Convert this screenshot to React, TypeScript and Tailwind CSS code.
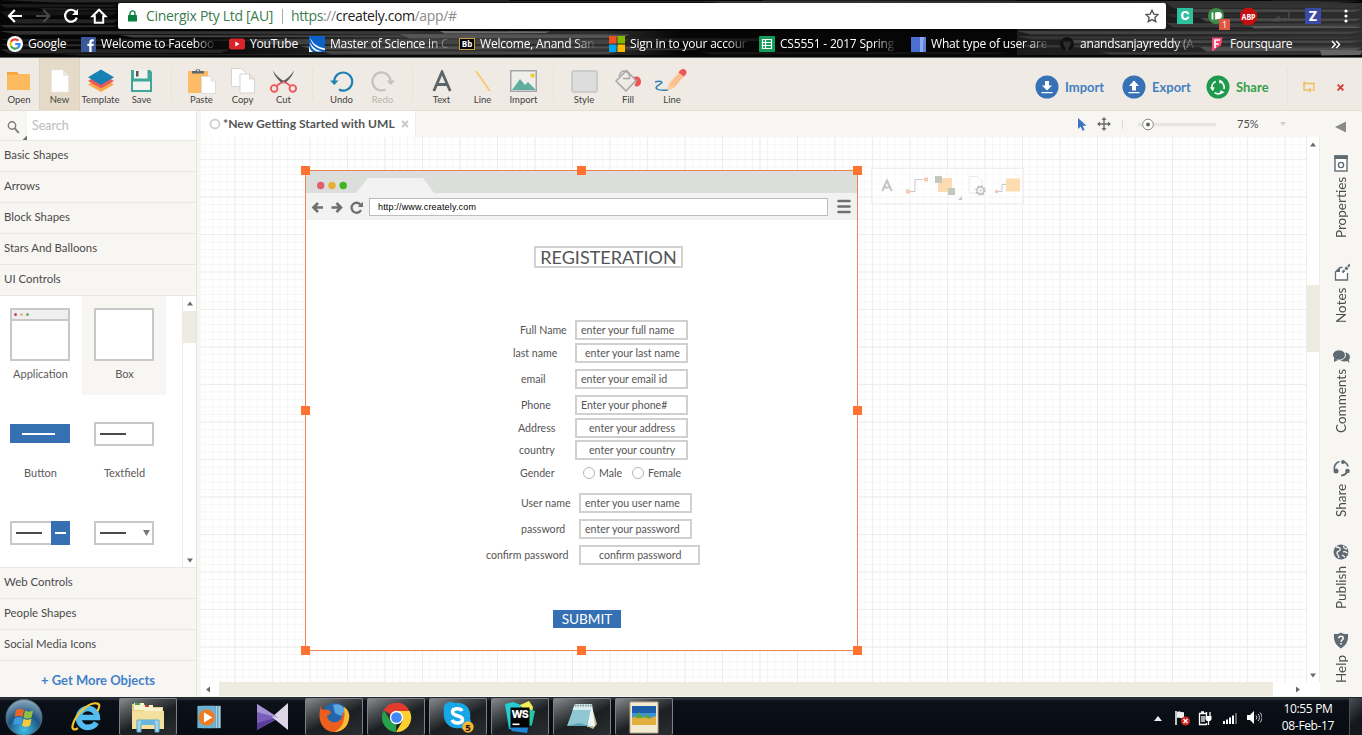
import React from "react";

const lato = "font-['Lato',sans-serif]";
const segoe = "font-['Open_Sans','Noto_Sans',sans-serif]";

/* ---------- browser chrome ---------- */

const streaks: [number, number, number, number, string][] = [
  [0, 0, 1362, 2, "#2e2e2e"], [700, 1, 662, 2, "#3a3a3a"], [0, 4, 118, 3, "#1f1f1f"], [0, 11, 118, 4, "#1a1a1a"], [10, 19, 108, 4, "#2a2a2a"],
  [0, 25, 118, 2, "#333"], [40, 8, 78, 2, "#242424"], [1166, 3, 196, 5, "#353535"], [1180, 9, 182, 3, "#4c4c4c"],
  [1166, 14, 196, 3, "#2e2e2e"], [1200, 18, 162, 3, "#505050"], [1166, 23, 196, 4, "#404040"], [1250, 26, 112, 2, "#606060"],
  [0, 31, 420, 3, "#3a3a3a"], [120, 35, 330, 2, "#484848"], [0, 39, 300, 2, "#222"], [250, 39, 380, 5, "#474747"],
  [0, 44, 200, 2, "#333"], [300, 46, 340, 3, "#555"], [400, 34, 230, 4, "#5a5a5a"], [320, 51, 300, 3, "#4a4a4a"],
  [0, 49, 230, 4, "#2c2c2c"], [60, 54, 560, 1, "#2c2c2c"], [440, 31, 110, 2, "#777"], [560, 48, 140, 2, "#3a3a3a"],
  [640, 38, 130, 3, "#1e1e1e"], [700, 52, 310, 2, "#1a1a1a"], [1017, 31, 345, 3, "#484848"], [1017, 36, 345, 3, "#383838"],
  [1060, 40, 302, 3, "#4c4c4c"], [1017, 45, 345, 2, "#3c3c3c"], [1200, 47, 162, 4, "#565656"], [1100, 52, 262, 2, "#3c3c3c"],
  [1320, 50, 42, 5, "#707070"],
];

function Streaks() {
  return (
    <svg className="absolute inset-0 h-full w-full" viewBox="0 0 1362 58" preserveAspectRatio="none">
      <defs>
        <linearGradient id="grayLeft"><stop offset="0" stopColor="#2c2c2c" stopOpacity="0" /><stop offset=".4" stopColor="#303030" /><stop offset=".85" stopColor="#2c2c2c" /><stop offset="1" stopColor="#2c2c2c" stopOpacity="0" /></linearGradient>
        <linearGradient id="grayRight"><stop offset="0" stopColor="#1c1c1c" /><stop offset="1" stopColor="#2e2e2e" /></linearGradient>
      </defs>
      <rect x="200" y="31" width="480" height="24" fill="url(#grayLeft)" />
      <rect x="1017" y="29" width="345" height="26" fill="url(#grayRight)" />
      <rect x="1166" y="3" width="196" height="26" fill="url(#grayRight)" />
      {streaks.map(([x, y, w, h, c], i) => (
        <path key={i} fill={c} opacity=".85" d={`M${x} ${y}L${x + w} ${y + 0.6}L${x + w * 0.96} ${y + h}L${x + w * 0.04} ${y + h + 0.4}z`} />
      ))}
      <path d="M0 57.5H1362" stroke="#6a6a68" />
    </svg>
  );
}

function GoogleG() {
  return (
    <svg width="16" height="16" viewBox="0 0 16 16" fill="none">
      <circle cx="8" cy="8" r="8" fill="#fff" />
      <g strokeWidth="2.2">
        <path d="M11.4 4.8A4.6 4.6 0 0 0 4 5.8" stroke="#ea4335" />
        <path d="M4 5.8a4.6 4.6 0 0 0 0 4.6" stroke="#fbbc05" />
        <path d="M4 10.3a4.6 4.6 0 0 0 7 1.2" stroke="#34a853" />
        <path d="M11 11.6A4.6 4.6 0 0 0 12.6 8.2H8.2" stroke="#4285f4" />
      </g>
    </svg>
  );
}
const FbIcon = () => (
  <svg width="15" height="15" viewBox="0 0 15 15">
    <rect width="15" height="15" rx="1" fill="#3b5998" />
    <path d="M8.3 15V9H6.4V6.8h1.9V5.2c0-1.9 1.1-3 2.9-3h1.6v2.2h-1.1c-.9 0-1.1.4-1.1 1.1v1.3h2.2L12.500 9h-1.900v6z" fill="#fff" />
  </svg>
);
const YtIcon = () => (
  <svg width="16" height="16" viewBox="0 0 16 16">
    <rect y="2.500" width="16" height="11" rx="2.500" fill="#d9252a" />
    <path d="M6.300 5.600v4.800L10.500 8z" fill="#fff" />
  </svg>
);
const SwooshIcon = () => (
  <svg width="16" height="16" viewBox="0 0 16 16">
    <rect width="16" height="16" fill="#0a62c8" />
    <path d="M1 1C3 7 8 11 16 12.500V14C7 13 2 8 1 1zM1 6c2 5 6 8 12 9.500H8C4 14 1.500 11 1 6zM0 10c1 3 2 5 4 6H0z" fill="#fff" />
  </svg>
);
const BbIcon = () => (
  <svg width="16" height="12" viewBox="0 0 16 12">
    <rect x=".5" y=".5" width="15" height="11" fill="#000" stroke="#c9a23c" />
    <text x="8" y="9" fill="#fff" fontSize="8" fontWeight="700" textAnchor="middle" fontFamily="Open Sans">Bb</text>
  </svg>
);
const MsIcon = () => (
  <svg width="16" height="16" viewBox="0 0 16 16">
    <path d="M0 0h7.500v7.500H0z" fill="#f25022" /><path d="M8.500 0H16v7.500H8.500z" fill="#7fba00" />
    <path d="M0 8.500h7.500V16H0z" fill="#00a4ef" /><path d="M8.500 8.500H16V16H8.500z" fill="#ffb900" />
  </svg>
);
const SheetIcon = () => (
  <svg width="16" height="16" viewBox="0 0 16 16">
    <rect width="16" height="16" rx="1" fill="#0f9d58" />
    <path d="M3.500 3.500h9v9h-9zM3.500 6.500h9M3.500 9.500h9M6.500 3.500v9" fill="none" stroke="#fff" strokeWidth="1.200" />
  </svg>
);
const BlueIcon = () => (
  <svg width="15" height="15" viewBox="0 0 15 15">
    <rect width="15" height="15" fill="#4a6fd0" /><path d="M9 0h4l-1 15H9z" fill="#8eaaf0" /><path d="M13 0h2v15h-3z" fill="#5d80dc" />
  </svg>
);
const GhIcon = () => (
  <svg width="16" height="16" viewBox="0 0 16 16">
    <circle cx="8" cy="8" r="7" fill="#101010" />
    <path d="M4.500 4.500 6.500 5.500h3l2-1v5L9.500 11.500V15h-3v-3.500L4.500 9.500z" fill="#2c2c2c" />
  </svg>
);
const FsIcon = () => (
  <svg width="16" height="16" viewBox="0 0 16 16">
    <path d="M3 1.500h10.500L12 9.500 9 11l-4.500 4H3z" fill="#f94877" /><path d="M5.500 4h5.500M5.500 8h4M6 3.500V12" stroke="#fff" strokeWidth="1.700" />
  </svg>
);

const bookmarks: { icon: React.ReactNode; text: string; box: string; fade?: boolean }[] = [
  { icon: <GoogleG />, text: "Google", box: "w-[73px]" },
  { icon: <FbIcon />, text: "Welcome to Faceboo", box: "w-[149px]", fade: true },
  { icon: <YtIcon />, text: "YouTube", box: "w-[80px]" },
  { icon: <SwooshIcon />, text: "Master of Science in C", box: "w-[150px]", fade: true },
  { icon: <BbIcon />, text: "Welcome, Anand San", box: "w-[150px]", fade: true },
  { icon: <MsIcon />, text: "Sign in to your accour", box: "w-[150px]", fade: true },
  { icon: <SheetIcon />, text: "CS5551 - 2017 Spring", box: "w-[151px]", fade: true },
  { icon: <BlueIcon />, text: "What type of user are", box: "w-[149px]", fade: true },
  { icon: <GhIcon />, text: "anandsanjayreddy (A", box: "w-[150px]", fade: true },
  { icon: <FsIcon />, text: "Foursquare", box: "w-[100px]" },
];

function BrowserBar() {
  return (
    <header className={`relative h-[58px] shrink-0 overflow-hidden bg-[#060606] ${segoe}`}>
      <Streaks />
      <div className="relative flex h-[29px] items-start">
        <svg width="118" height="29" viewBox="0 0 118 29" fill="none" stroke="#fff" strokeWidth="2.2" className="shrink-0">
          <path d="M22 16H9.500M14.800 10 9 16l5.800 6" />
          <path d="M36 16h12.500M43.500 10l5.800 6-5.800 6" stroke="#484848" />
          <path d="M75.800 12A6 6 0 1 0 76.800 17.600" />
          <path d="M78 9v6h-6z" fill="#fff" stroke="none" />
          <path d="M92.500 16.200 99 9.700l6.500 6.500h-2.300v6.600h-8.400v-6.600z" strokeWidth="2" />
        </svg>
        <div className="mt-[3px] flex h-[26px] w-[1048px] shrink-0 items-center rounded-[2px] bg-white text-[14px] leading-none">
          <svg width="9" height="12" viewBox="0 0 9 12" className="ml-[10px]">
            <rect y="5" width="9" height="6.500" rx=".6" fill="#0b8043" />
            <path d="M2 5.500V3.400a2.500 2.500 0 0 1 5 0v2.100" fill="none" stroke="#0b8043" strokeWidth="1.400" />
          </svg>
          <span className="ml-[9px] w-[136px] whitespace-nowrap tracking-[-0.3px] text-[#3b7d4f]">Cinergix Pty Ltd [AU]</span>
          <span className="h-[15px] w-px bg-[#aaa]" />
          <span className="ml-2 whitespace-nowrap tracking-[-0.37px] text-[#8c8c8c]">
            <span className="text-[#3b8050]">https</span>://<span className="text-[#222]">creately.com</span>/app/#
          </span>
          <svg width="14" height="14" viewBox="0 0 14 14" className="ml-auto mr-[7px]">
            <path d="M7 1.200 8.800 5.100l4.200.5-3.100 2.900.8 4.200L7 10.600l-3.700 2.100.8-4.200L1 5.600l4.200-.5z" fill="none" stroke="#555" strokeWidth="1.400" />
          </svg>
        </div>
        <div className="flex h-[29px] flex-1 items-center pl-[11px] pt-[3px]">
          <span className="flex size-4 items-center justify-center bg-[#2ebf9f] font-['Inter',sans-serif] text-[12px] font-extrabold leading-none text-white">C</span>
          <span className="relative ml-[15px] size-4">
            <svg width="16" height="16" viewBox="0 0 16 16">
              <circle cx="8" cy="8" r="8" fill="#3c8f4a" />
              <path d="M4.500 4.500v7M8 4.500v7M8.500 5h2a2.600 2.600 0 0 1 0 5.200H8" fill="#fff" stroke="#fff" strokeWidth="1.800" />
            </svg>
            <span className="absolute left-[11px] top-[11px] flex h-[11px] w-[11px] items-center justify-center bg-[#e0553f] text-[9px] leading-none text-white">1</span>
          </span>
          <svg width="17" height="17" viewBox="0 0 17 17" className="ml-4">
            <path d="M5 0h7l5 5v7l-5 5H5l-5-5V5z" fill="#c70d0d" />
            <text x="8.500" y="11.700" fill="#fff" fontSize="8.500" fontWeight="700" textAnchor="middle" fontFamily="Noto Sans" textLength="14" lengthAdjust="spacingAndGlyphs">ABP</text>
          </svg>
          <svg width="17" height="16" viewBox="0 0 17 16" className="ml-[16px]" fill="none" stroke="#505050" strokeWidth="1.200">
            <path d="M4 3h12v8H4M1 14v-3M3.500 14V9M6 14V8M9 11h3v3" />
          </svg>
          <span className="ml-[15px] flex size-4 items-center justify-center bg-[#3b4ba3] font-['Inter',sans-serif] text-[13px] font-extrabold leading-none text-white">Z</span>
          <svg width="4" height="16" viewBox="0 0 4 16" className="ml-[23px]" fill="#fff">
            <circle cx="2" cy="3" r="1.600" /><circle cx="2" cy="8" r="1.600" /><circle cx="2" cy="13" r="1.600" />
          </svg>
        </div>
      </div>
      <div className="relative flex h-[29px] items-center pl-[7px] pt-[1px] text-[12px] leading-none text-white">
        {bookmarks.map((b) => (
          <div key={b.text} className={`flex h-full shrink-0 items-center ${b.box}`}>
            <span className="flex w-[16px] shrink-0 justify-center">{b.icon}</span>
            <span
              className={`ml-[5px] whitespace-nowrap py-1 tracking-[-0.2px] ${
                b.fade ? "[mask-image:linear-gradient(to_right,black_82%,rgba(0,0,0,0.15)_100%)]" : ""
              }`}
            >
              {b.text}
            </span>
          </div>
        ))}
        <svg width="10" height="9" viewBox="0 0 10 9" className="ml-[22px]" fill="none" stroke="#fff" strokeWidth="1.500">
          <path d="M1 1l3.200 3.500L1 8M5.300 1l3.200 3.500L5.300 8" />
        </svg>
      </div>
    </header>
  );
}

/* ---------- application toolbar ---------- */

function Tool({ label, box, active, dim, children }: { label: string; box: string; active?: boolean; dim?: boolean; children: React.ReactNode }) {
  return (
    <div className={`flex h-full shrink-0 flex-col items-center ${box} ${active ? "border-x border-[#ddd2bc] bg-[#e4dac7]" : ""}`}>
      <span className="mt-[10px] flex h-[26px] items-center justify-center">{children}</span>
      <span className={`whitespace-nowrap text-[9.5px] leading-[12px] ${dim ? "text-[#bab6b0]" : "text-[#3f3f3f]"}`}>{label}</span>
    </div>
  );
}
const Sep = ({ box = "w-[18px]" }: { box?: string }) => (
  <div className={`flex shrink-0 justify-center py-[9px] ${box}`}>
    <span className="h-full w-px bg-[#e8e2d9]" />
  </div>
);

const CycleGlyph = ({ c }: { c: string }) => (
  <g fill="none" stroke={c} strokeWidth="1.500">
    <path d="M2.500 9A5.500 5.500 0 0 1 6 2.800M10 2.800A5.500 5.500 0 0 1 13.400 9.500M11.500 12.500a5.500 5.500 0 0 1-6.600.3" />
    <path d="M9 .8 9.300 4.800l3.200-2zM.6 8.200l2.800 3.300L5 8zM14 12.500l-3.800 1.800V10.500z" fill={c} stroke="none" />
  </g>
);

function Toolbar() {
  return (
    <div className="flex h-[53px] shrink-0 border-b border-[#e6dfd4] bg-[#efeae3]">
      <Tool label="Open" box="w-[38px]">
        <svg width="24" height="20" viewBox="0 0 24 20"><path d="M0 1h10l1.500 2H23v16H0z" fill="#fdb95e" /><path d="M0 1h10l1.500 2.500H0z" fill="#f3a43c" /></svg>
      </Tool>
      <Tool label="New" box="ml-px w-[41px]" active>
        <svg width="18" height="24" viewBox="0 0 18 24"><path d="M.5 1H12l5.500 6v16H.5z" fill="#fff" stroke="#e8e4de" strokeWidth=".6" /><path d="M12 1v6h5.500z" fill="#ece8e1" /></svg>
      </Tool>
      <Tool label="Template" box="w-[41px]">
        <svg width="26" height="24" viewBox="0 0 26 24">
          <path d="M0 15.500 13 8l13 7.500L13 23z" fill="#f9a94a" /><path d="M0 12 13 4.500 26 12l-13 7.500z" fill="#ee5a5a" /><path d="M0 8.300 13 .5l13 7.800L13 16z" fill="#1980b4" />
        </svg>
      </Tool>
      <Tool label="Save" box="w-[41px]">
        <svg width="21" height="22" viewBox="0 0 21 22">
          <path d="M0 0h19l2 2v20H0z" fill="#3fa79a" /><path d="M3 0h13.500v8.500H3z" fill="#f2f2ee" /><path d="M5 1h2.500v5.500H5z" fill="#555" /><path d="M2 11.500h17V20H2z" fill="#f2f2ee" />
        </svg>
      </Tool>
      <Sep box="w-[19px]" />
      <Tool label="Paste" box="w-[41px]">
        <svg width="28" height="26" viewBox="0 0 28 26">
          <path d="M0 3h20v22H0z" fill="#fdbb66" /><path d="M4 3h3.500a2.600 2.600 0 0 1 5 0H16v2.500H4z" fill="#5b656b" /><circle cx="10" cy="2.500" r="1" fill="#efeae3" />
          <path d="M13.500 8.500h9l5 5v12h-14z" fill="#fff" stroke="#dcdcdc" /><path d="M22.500 8.500v5h5z" fill="#e8e8e8" />
        </svg>
      </Tool>
      <Tool label="Copy" box="w-[41px]">
        <svg width="24" height="26" viewBox="0 0 24 26" fill="#fff" stroke="#d8d5d0">
          <path d="M.5.5h10l4 4v14H.500z" /><path d="M9 6h9.500l5 5v14H9z" /><path d="M18.500 6v5h5z" fill="#e8e8e8" />
        </svg>
      </Tool>
      <Tool label="Cut" box="w-[41px]">
        <svg width="27" height="24" viewBox="0 0 27 24" fill="none">
          <path d="M7 16.500 13.500 12l6.500 4.500" stroke="#ee5458" strokeWidth="1.800" />
          <path d="M3 1.500c3 5 7 8.500 12.500 12l-2.500 1.500C8.500 11.500 4 6.500 3 1.500zM24 1.500c-3 5-7 8.500-12.500 12l2.500 1.500C18.500 11.500 23 6.500 24 1.500z" fill="#555b60" />
          <circle cx="4.200" cy="19.500" r="3.300" stroke="#ee5458" strokeWidth="1.800" /><circle cx="22.800" cy="19.500" r="3.300" stroke="#ee5458" strokeWidth="1.800" />
        </svg>
      </Tool>
      <Sep box="w-[17px]" />
      <Tool label="Undo" box="w-[41px]">
        <svg width="24" height="22" viewBox="0 0 24 22"><path d="M4.200 11A9 9 0 1 1 9 19.500" fill="none" stroke="#1f80b8" strokeWidth="2.200" /><path d="M0 10.500h8.500L4.300 15z" fill="#1f80b8" /></svg>
      </Tool>
      <Tool label="Redo" box="w-[41px]" dim>
        <svg width="24" height="22" viewBox="0 0 24 22"><path d="M19.500 11A9 9 0 1 0 14.500 19.500" fill="none" stroke="#c5c2bc" strokeWidth="2.200" /><path d="M24 10.500h-8.500l4.200 4.500z" fill="#c5c2bc" /></svg>
      </Tool>
      <Sep />
      <Tool label="Text" box="w-[41px]">
        <svg width="20" height="22" viewBox="0 0 20 22" fill="none" stroke="#5b6469" strokeWidth="2.800"><path d="M1.800 21 10 2l8.200 19M5 14.500h10" /></svg>
      </Tool>
      <Tool label="Line" box="w-[41px]">
        <svg width="16" height="22" viewBox="0 0 16 22"><path d="M1 1l14 20" stroke="#fbc878" strokeWidth="2" /></svg>
      </Tool>
      <Tool label="Import" box="w-[41px]">
        <svg width="27" height="22" viewBox="0 0 27 22">
          <rect x=".75" y=".75" width="25.500" height="20.500" fill="#efeeea" stroke="#a3a6a8" strokeWidth="1.500" />
          <path d="M2 20l8-11 5 6 3-3 7 7v1z" fill="#5fae9e" /><circle cx="22.500" cy="5.500" r="2.300" fill="#e8d23c" />
        </svg>
      </Tool>
      <Sep />
      <Tool label="Style" box="w-[44px]">
        <span className="h-[23px] w-[27px] rounded-[3px] border-2 border-[#cbcccb] bg-[#dcdddc]" />
      </Tool>
      <Tool label="Fill" box="w-[44px]">
        <svg width="27" height="24" viewBox="0 0 27 24" fill="none">
          <path d="M18 9c3-3 8-1 8 3.500 0 3-2 5-4.500 5s-2-3-.5-4z" fill="#ee5458" />
          <path d="M11.500 1.500 21 11.500 11 22 1 12z" fill="#efeae3" stroke="#a3a6a8" strokeWidth="1.500" />
          <path d="M4 7.500C5 3 8 1 11 2.500s4 5 3.500 7H8" stroke="#a3a6a8" strokeWidth="1.300" />
        </svg>
      </Tool>
      <Tool label="Line" box="w-[44px]">
        <svg width="32" height="24" viewBox="0 0 32 24" fill="none" className="mr-[3px]">
          <path d="M0 13c4-1.500 8-.5 6.500 1S-1 18 2 20s7 1.500 11 1" stroke="#2b7fb5" strokeWidth="1.500" />
          <path d="M12.500 21.500 14 14.500 24.500 2.500l5 4.500L19 19z" fill="#fbc99a" /><path d="M16 16 26 4.500M18 17.500 28 6" stroke="#f0aa70" strokeWidth=".8" />
          <path d="M23.500 3.500C26-.5 29-.5 30.500 1s1.500 4-1.500 6.500z" fill="#ee5458" />
        </svg>
      </Tool>
      <div className="ml-auto flex h-full items-center pt-[6px] text-[13px] font-bold leading-none">
        <svg width="24" height="24" viewBox="0 0 24 24"><circle cx="12" cy="12" r="11.500" fill="#3672b5" /><path d="M10 6h4v4.500h3L12 15.500 7 10.500h3zM6.500 17h11v1.300h-11z" fill="#fff" /></svg>
        <span className="ml-[6px] w-[57px] text-[#4280c4]">Import</span>
        <svg width="24" height="24" viewBox="0 0 24 24"><circle cx="12" cy="12" r="11.500" fill="#3672b5" /><path d="M10 15.500h4V11h3l-5-5.500L7 11h3zM6.500 17h11v1.300h-11z" fill="#fff" /></svg>
        <span className="ml-[6px] w-[54px] text-[#4280c4]">Export</span>
        <svg width="24" height="24" viewBox="0 0 24 24"><circle cx="12" cy="12" r="11.500" fill="#1f9a4d" /><g transform="translate(3.200 3.500) scale(1.100)"><CycleGlyph c="#fff" /></g></svg>
        <span className="ml-[6px] w-[51px] text-[#35a04a]">Share</span>
        <span className="h-[38px] w-px bg-[#e9e2da]" />
        <svg width="14" height="12" viewBox="0 0 14 12" className="ml-[14px]" fill="none" stroke="#f0bd5c" strokeWidth="1.300">
          <path d="M3.500 2.500H12v6.500h-1.500M1.500 1.500 3.500 2.500M2 3.500V9h6.500M3 .8 1.500 2.500 3 4.200M7.500 7.300 9 9 7.500 10.700" />
        </svg>
        <svg width="7" height="7" viewBox="0 0 7 7" className="ml-[21px] mr-[18px]" stroke="#dd3b35" strokeWidth="1.900"><path d="M.6.600l5.800 5.800M6.400.6.600 6.400" /></svg>
      </div>
    </div>
  );
}

/* ---------- left sidebar ---------- */

const Category = ({ children }: { children: React.ReactNode }) => (
  <div className="flex h-[31px] shrink-0 items-center border-b border-[#e9e8e3] pb-[2px] pl-1 text-[11.4px] leading-none text-[#4b4b4b]">{children}</div>
);

const Tile = ({ label, active, children }: { label?: string; active?: boolean; children: React.ReactNode }) => (
  <div className={`flex h-[99px] flex-col items-center pt-3 ${active ? "bg-[#f7f6f2]" : ""}`}>
    <div className="flex h-[53px] items-center">{children}</div>
    {label && <span className="ml-px mt-[6px] text-[11px] leading-[14px] text-[#5b5b5b]">{label}</span>}
  </div>
);

const ArrowGlyph = ({ turn = "" }: { turn?: string }) => (
  <svg width="6" height="5" viewBox="0 0 6 5" className={turn}><path d="M3 .5 6 4.500H0z" fill="#6a6a6a" /></svg>
);

function Sidebar() {
  return (
    <aside className="flex w-[197px] shrink-0 flex-col border-r border-[#e6e4df] bg-[#f7f6f3]">
      <div className="flex h-[30px] shrink-0 border-b border-[#e9e8e3]">
        <div className="flex w-[27px] shrink-0 items-center pl-[7px]">
          <svg width="20" height="28" viewBox="0 0 20 28" fill="none" stroke="#7a7a7a">
            <circle cx="5" cy="13.500" r="3.700" strokeWidth="1.400" /><path d="M7.800 16.300 11.800 21" strokeWidth="1.900" /><path d="M20 23.500v4.500h-4.500z" fill="#6f6f6f" stroke="none" />
          </svg>
        </div>
        <div className="flex flex-1 items-center bg-white pl-[5px] pt-px text-[12.5px] leading-none text-[#bcbcbc]">Search</div>
      </div>
      <Category>Basic Shapes</Category>
      <Category>Arrows</Category>
      <Category>Block Shapes</Category>
      <Category>Stars And Balloons</Category>
      <Category>UI Controls</Category>
      <div className="flex h-[272px] shrink-0 overflow-hidden border-b border-[#e9e8e3] bg-white">
        <div className="grid w-[182px] shrink-0 grid-cols-[80px_84px] content-start gap-x-[2px]">
          <Tile label="Application">
            <div className="flex h-[53px] w-[60px] flex-col border-2 border-[#c8c8c8] bg-white">
              <div className="flex h-[11px] items-center gap-[3px] border-b-2 border-[#c8c8c8] bg-[#efefef] pl-[2px]">
                <i className="size-[3px] rounded-full bg-[#c04a52]" /><i className="size-[3px] rounded-full bg-[#e5b97d]" /><i className="size-[3px] rounded-full bg-[#6cae72]" />
              </div>
            </div>
          </Tile>
          <Tile label="Box" active>
            <div className="h-[53px] w-[60px] border-2 border-[#c8c8c8] bg-white" />
          </Tile>
          <Tile label="Button">
            <div className="flex h-[19px] w-[60px] items-center justify-center bg-[#3570b3]"><i className="mr-[3px] h-[2px] w-[33px] bg-white" /></div>
          </Tile>
          <Tile label="Textfield">
            <div className="flex h-6 w-[60px] items-center border-2 border-[#c8c8c8] bg-white pl-1"><i className="h-[2px] w-[26px] bg-[#4a4a4a]" /></div>
          </Tile>
          <Tile>
            <div className="flex h-6 w-[60px]">
              <div className="flex w-[41px] items-center border-2 border-r-0 border-[#c8c8c8] pl-1"><i className="h-[2px] w-[26px] bg-[#4a4a4a]" /></div>
              <div className="flex w-[19px] items-center justify-center bg-[#3570b3]"><i className="h-[2px] w-[11px] bg-white" /></div>
            </div>
          </Tile>
          <Tile>
            <div className="flex h-6 w-[60px] items-center justify-between border-2 border-[#c8c8c8] pl-1 pr-[2px]">
              <i className="h-[2px] w-[26px] bg-[#4a4a4a]" />
              <svg width="7" height="6" viewBox="0 0 7 6"><path d="M0 0h7L3.500 6z" fill="#777" /></svg>
            </div>
          </Tile>
        </div>
        <div className="flex flex-1 flex-col items-center border-l border-[#eceae6]">
          <div className="flex h-[15px] items-center"><ArrowGlyph /></div>
          <div className="h-8 w-full bg-[#eeebe0]" />
          <div className="mt-auto flex h-[14px] items-center"><ArrowGlyph turn="rotate-180" /></div>
        </div>
      </div>
      <Category>Web Controls</Category>
      <Category>People Shapes</Category>
      <Category>Social Media Icons</Category>
      <div className="flex flex-1 items-center justify-center pt-[3px] text-[13px] font-bold leading-none text-[#4280c8]">+ Get More Objects</div>
    </aside>
  );
}

/* ---------- canvas ---------- */

const labels: [string, string][] = [
  ["Full Name", "left-[215px] top-[153px]"],
  ["last name", "left-[208px] top-[176px]"],
  ["email", "left-[216px] top-[202px]"],
  ["Phone", "left-[216px] top-[228px]"],
  ["Address", "left-[213px] top-[251px]"],
  ["country", "left-[214px] top-[273px]"],
  ["Gender", "left-[215px] top-[296px]"],
  ["Male", "left-[294px] top-[296px]"],
  ["Female", "left-[343px] top-[296px]"],
  ["User name", "left-[216px] top-[326px]"],
  ["password", "left-[216px] top-[352px]"],
  ["confirm password", "left-[181px] top-[378px]"],
];

const fields: [string, string][] = [
  ["enter your full name", "left-[270px] top-[150px] w-[113px] pl-[4px]"],
  ["enter your last name", "left-[270px] top-[173px] w-[113px] pl-[8px]"],
  ["enter your email id", "left-[270px] top-[199px] w-[113px] pl-[4px]"],
  ["Enter your phone#", "left-[270px] top-[225px] w-[113px] pl-[4px]"],
  ["enter your address", "left-[270px] top-[248px] w-[113px] pl-[12px]"],
  ["enter your country", "left-[270px] top-[270px] w-[113px] pl-[12px]"],
  ["enter you user name", "left-[274px] top-[323px] w-[113px] pl-[4px]"],
  ["enter your password", "left-[274px] top-[349px] w-[113px] pl-[4px]"],
  ["confirm password", "left-[274px] top-[375px] w-[121px] pl-[18px]"],
];

const handles = [
  "left-[-4px] top-[-4px]", "left-[272px] top-[-4px]", "left-[548px] top-[-4px]",
  "left-[-4px] top-[236px]", "left-[548px] top-[236px]",
  "left-[-4px] top-[476px]", "left-[272px] top-[476px]", "left-[548px] top-[476px]",
];

function Mockup() {
  return (
    <div className="absolute left-[104px] top-[33px] h-[481px] w-[553px]">
      <div className="flex h-full w-full flex-col border border-[#ec8458] bg-white">
        <svg width="551" height="22" viewBox="0 0 551 22" className="shrink-0">
          <path d="M0 0h551v22H0z" fill="#dcdedc" /><path d="M50 22 62 7h55l11 15z" fill="#f2f2f2" />
          <circle cx="14.700" cy="14.500" r="3.700" fill="#e35e6c" /><circle cx="26" cy="14.500" r="3.700" fill="#e5b030" /><circle cx="37.200" cy="14.500" r="3.700" fill="#3fb524" />
        </svg>
        <div className="flex h-[27px] shrink-0 items-center bg-[#f2f2f2]">
          <svg width="63" height="27" viewBox="0 0 63 27" fill="none" stroke="#6f6f6f" strokeWidth="2.600">
            <path d="M17 14.500H8M12 10 7.500 14.500l4.500 4.500M25.500 14.500h9M30.500 10l4.500 4.500-4.500 4.500" />
            <path d="M54.500 11.700A5 5 0 1 0 55 17" strokeWidth="2.300" /><path d="M57 8.800v5.200h-5.200z" fill="#6f6f6f" stroke="none" />
          </svg>
          <div className="flex h-[18px] w-[459px] items-center border border-[#bdbdbd] bg-white pl-[8px] pt-px font-['Liberation_Sans',sans-serif] text-[9px] leading-none tracking-[0.16px] text-black">
            http://www.creately.com
          </div>
          <svg width="14" height="15" viewBox="0 0 14 15" className="ml-[9px]" stroke="#6f6f6f" strokeWidth="2.600" strokeLinecap="round"><path d="M1.500 2h11M1.500 7.500h11M1.500 13h11" /></svg>
        </div>
      </div>
      <div className="absolute left-[229px] top-[76px] flex h-[22px] w-[149px] items-center justify-center whitespace-nowrap border-2 border-[#d2d2d2] text-[18px] leading-none text-[#555]">REGISTERATION</div>
      {labels.map(([t, p]) => (
        <span key={t} className={`absolute whitespace-nowrap text-[10.6px] leading-[14px] text-[#555] ${p}`}>{t}</span>
      ))}
      {fields.map(([t, p]) => (
        <div key={t} className={`absolute flex h-[20px] items-center whitespace-nowrap border-2 border-[#d0d0d0] bg-white text-[10.6px] leading-none text-[#555] ${p}`}>{t}</div>
      ))}
      <i className="absolute left-[278px] top-[297px] size-3 rounded-full border border-[#b5b5b5]" />
      <i className="absolute left-[327px] top-[297px] size-3 rounded-full border border-[#b5b5b5]" />
      <div className="absolute left-[248px] top-[440px] flex h-[18px] w-[68px] items-center justify-center bg-[#3570b3] pt-px text-[13.6px] leading-none text-white">SUBMIT</div>
      {handles.map((h) => (
        <i key={h} className={`absolute size-[9px] bg-[#ff7230] ${h}`} />
      ))}
    </div>
  );
}

function Canvas() {
  return (
    <div className="relative h-[545px] flex-1 overflow-hidden bg-white">
      <svg width="1105" height="545" className="block">
        <defs>
          <pattern id="minor" x="-4" y="22" width="7.500" height="7.500" patternUnits="userSpaceOnUse"><path d="M.5 0v7.500M0 .5h7.500" stroke="#f6f6f6" fill="none" /></pattern>
          <pattern id="major" x="-4" y="22" width="37.500" height="37.500" patternUnits="userSpaceOnUse"><path d="M.5 0v37.500M0 .5h37.500" stroke="#ededed" fill="none" /></pattern>
        </defs>
        <rect width="1105" height="545" fill="url(#minor)" /><rect width="1105" height="545" fill="url(#major)" />
      </svg>
      <Mockup />
      <svg width="153" height="37" viewBox="0 0 153 37" className="absolute left-[670px] top-[31px]" fill="none">
        <rect x=".5" y=".5" width="152" height="35" fill="#fff" fillOpacity=".4" stroke="#f4efec" />
        <path d="M11.300 23 16 12.500l4.700 10.500M13 19.500h6" stroke="#c6c6c6" strokeWidth="2" />
        <path d="M38 23.500h6V11.500h8" stroke="#c9c9c9" /><path d="M35 21.500h4v4h-4zM53 9.500h4v4h-4z" fill="#f8c8b4" />
        <path d="M67 10h14v14H67z" fill="#fddcb2" /><path d="M64 8h7v7h-7zM77 20h7v7h-7z" fill="#c3c8bc" /><path d="M91 28v4h-4z" fill="#c5c5c5" />
        <path d="M98 8.500h9l4 4V25H98z" stroke="#ececec" /><circle cx="109.500" cy="22.500" r="3.500" stroke="#bdbdbd" strokeWidth="1.400" /><circle cx="109.500" cy="22.500" r="4.500" stroke="#bdbdbd" strokeWidth="1.600" strokeDasharray="1.700 1.830" /><circle cx="109.500" cy="22.500" r="1" fill="#bdbdbd" />
        <path d="M127 23.500h4v-7h4" stroke="#c9c9c9" /><path d="M124 22h3v3h-3z" fill="#f8c8b4" /><path d="M135 10.500h14v13h-14z" fill="#fddcb2" />
      </svg>
    </div>
  );
}

function Workspace() {
  return (
    <main className="flex min-w-0 flex-1 flex-col bg-[#f7f6f3] pl-[4px]">
      <div className="flex h-[26px] shrink-0 items-center">
        <div className="flex h-full w-[215px] items-center border-r border-[#efece6] bg-white pl-[8px]">
          <svg width="12" height="12" viewBox="0 0 12 12"><circle cx="6" cy="6" r="4.500" fill="none" stroke="#cfcfcf" strokeWidth="1.800" /></svg>
          <span className="ml-[2px] w-[178px] whitespace-nowrap text-[12.1px] font-bold leading-none text-[#555]">*New Getting Started with UML</span>
          <svg width="8" height="8" viewBox="0 0 8 8" stroke="#c6c6c6" strokeWidth="1.800"><path d="M1 1l6 6M7 1 1 7" /></svg>
        </div>
        <div className="ml-auto flex h-full items-center pr-[34px]">
          <svg width="10" height="13" viewBox="0 0 10 13"><path d="M1 0v11l2.700-2.500L5.500 12.800l2-.9L5.700 7.800H9.500z" fill="#3a72c4" /></svg>
          <svg width="14" height="14" viewBox="0 0 14 14" className="ml-[10px]"><path d="M7 2v10M2 7h10" stroke="#6b6b6b" strokeWidth="1.400" /><path d="M7 0l2.500 3h-5zM7 14l2.500-3h-5zM0 7l3-2.500v5zM14 7l-3-2.500v5z" fill="#6b6b6b" /></svg>
          <i className="ml-[11px] h-[9px] w-px bg-[#d9d9d6]" />
          <svg width="78" height="13" viewBox="0 0 78 13" className="ml-[15px]">
            <path d="M0 6.500h78" stroke="#e7e6e2" strokeWidth="3.500" /><circle cx="10" cy="6.500" r="5.300" fill="#fff" stroke="#8a8a8a" /><circle cx="10" cy="6.500" r="2" fill="#666" />
          </svg>
          <span className="ml-[21px] w-[43px] pb-[2px] text-[11px] leading-none text-[#4d4d4d]">75%</span>
          <svg width="6" height="4" viewBox="0 0 6 4"><path d="M0 0h6L3 4z" fill="#d0d0cd" /></svg>
        </div>
      </div>
      <div className="flex h-[545px] shrink-0">
        <Canvas />
        <div className="flex w-[14px] shrink-0 flex-col items-center border-x border-[#edebe7] bg-white">
          <div className="flex h-[14px] items-center"><ArrowGlyph /></div>
          <div className="mt-[134px] h-[67px] w-full bg-[#eeebe0]" />
          <div className="mt-auto flex h-[14px] items-center"><ArrowGlyph turn="rotate-180" /></div>
        </div>
      </div>
      <div className="flex h-[15px] shrink-0 items-center border-b border-[#f7f6f3] bg-white">
        <span className="flex w-[18px] pl-[4px]"><ArrowGlyph turn="-rotate-90" /></span>
        <div className="h-full w-[1054px] bg-[#eeebe0]" />
        <span className="ml-[22px]"><ArrowGlyph turn="rotate-90" /></span>
      </div>
    </main>
  );
}

/* ---------- right rail ---------- */

function RailItem({ label, gap, h, children }: { label: string; gap: string; h: string; children: React.ReactNode }) {
  return (
    <div className={`flex shrink-0 flex-col items-center ${gap}`}>
      <svg width="18" height="18" viewBox="0 0 18 18">{children}</svg>
      <span className={`flex rotate-180 items-center whitespace-nowrap text-[13.500px] leading-[18px] text-[#494d50] [writing-mode:vertical-rl] ${h}`}>{label}</span>
    </div>
  );
}

function Rail() {
  return (
    <nav className="flex w-[42px] shrink-0 flex-col items-center bg-[#f7f6f3]">
      <svg width="12" height="12" viewBox="0 0 12 12" className="mt-[10px] shrink-0"><path d="M0 6 11 .5v11z" fill="#8a8a8a" /></svg>
      <RailItem label="Properties" gap="mt-[21px]" h="h-[66px]">
        <rect x="3" y="2" width="12" height="15" fill="#fff" stroke="#5e6b73" strokeWidth="1.400" /><path d="M2.300 1.300h13.400V5H2.300z" fill="#5e6b73" /><circle cx="9" cy="11" r="2.600" fill="none" stroke="#5e6b73" strokeWidth="1.400" />
      </RailItem>
      <RailItem label="Notes" gap="mt-[25px]" h="h-[42px]">
        <path d="M15.500 10v7h-12V9L8 4.500h2.500" fill="#fff" stroke="#5e6b73" strokeWidth="1.300" /><path d="M3.500 9H8V4.500z" fill="#5e6b73" /><path d="M10.500 9.500l7.500-8" stroke="#5e6b73" strokeWidth="2.200" strokeDasharray="3 1" /><path d="M13.500 4l2.500 2.300" stroke="#5e6b73" strokeWidth="1.300" />
      </RailItem>
      <RailItem label="Comments" gap="mt-[24px]" h="h-[68px]">
        <ellipse cx="12.500" cy="10" rx="5.500" ry="4.500" fill="#5e6b73" /><path d="M14 13l3.500 3-1-4z" fill="#5e6b73" /><ellipse cx="7" cy="8" rx="6.500" ry="5.200" fill="#5e6b73" stroke="#f7f6f3" /><path d="M2 11l0 4 4-2z" fill="#5e6b73" />
      </RailItem>
      <RailItem label="Share" gap="mt-[26px]" h="h-[40px]">
        <g fill="none" stroke="#5e6b73" strokeWidth="1.700"><path d="M2.500 11A7 7 0 0 1 7.500 2.500M11 2.500a7 7 0 0 1 5 5M15 13a7 7 0 0 1-6 3.500" /></g>
        <circle cx="4" cy="12" r="2.500" fill="#5e6b73" /><circle cx="11" cy="3" r="2" fill="#5e6b73" /><circle cx="15.500" cy="12" r="2.300" fill="#5e6b73" />
      </RailItem>
      <RailItem label="Publish" gap="mt-[26px]" h="h-[48px]">
        <circle cx="9" cy="9" r="7.500" fill="#5e6b73" /><path d="M4 4c3 0 5 1 4 3s-3 1-3 3 2 2 2 5M12 2.500c-1 2 0 3 3 3.500M11 9c2-1 3 0 4.500 1M10 12l3 2" stroke="#f7f6f3" strokeWidth="1.300" fill="none" />
      </RailItem>
      <RailItem label="Help" gap="mt-[22px]" h="h-[34px]">
        <path d="M9 1.500c2 1.500 4.500 1.800 7 1.500.5 6-1 11-7 14.500C3 14 1.500 9 2 3c2.500.3 5 0 7-1.500z" fill="#5e6b73" />
        <path d="M6.800 7.300c0-2.800 4.400-2.800 4.400 0 0 1.700-2.200 1.700-2.200 3.500M9 12v1.600" fill="none" stroke="#fff" strokeWidth="1.500" />
      </RailItem>
    </nav>
  );
}

/* ---------- taskbar ---------- */

const TaskButton = ({ open, box, children }: { open?: boolean; box: string; children: React.ReactNode }) => (
  <div
    className={`flex h-[37px] shrink-0 items-center justify-center ${box} ${
      open ? "rounded-[2px] border border-b-0 border-[#7d8184] bg-[linear-gradient(155deg,#85898c_0%,#4b4f52_28%,#1c1f22_55%,#2b2e31_100%)]" : ""
    }`}
  >
    {children}
  </div>
);

function Taskbar() {
  return (
    <footer className={`flex h-[38px] shrink-0 items-end overflow-hidden border-t border-[#23282e] bg-[linear-gradient(to_bottom,#343a42_0px,#0c1119_3px,#070b12_100%)] ${segoe}`}>
      <TaskButton box="w-[48px]">
        <svg width="38" height="36" viewBox="0 0 38 36">
          <defs><radialGradient id="orb" cx=".5" cy=".85" r=".9"><stop offset="0" stopColor="#3fc0e8" /><stop offset=".5" stopColor="#1f5682" /><stop offset="1" stopColor="#9fb9c8" /></radialGradient></defs>
          <circle cx="19" cy="18.500" r="18" fill="url(#orb)" stroke="#506878" />
          <path d="M11 11c3-2 5-1.500 8 0l-1.300 7c-3-1.500-5-1.500-8 0z" fill="#e8642a" /><path d="M20 11.500c3 1.500 5 1.500 8 0l-1.500 7c-3 1.500-5 1.500-8 0z" fill="#8fc043" />
          <path d="M9.500 19.200c3-1.500 5-1.500 8 0l-1.300 7c-3-1.500-5-1.500-8 0z" fill="#3f9be0" /><path d="M18.500 19.800c3 1.500 5 1.500 8 0l-1.500 7c-3 1.500-5 1.500-8 0z" fill="#f9c93c" />
        </svg>
      </TaskButton>
      <TaskButton box="w-[77px]">
        <svg width="32" height="32" viewBox="0 0 34 34" fill="none" className="mr-[2px]">
          <path d="M28 23c-2 3.500-5 5-9 5A10 10 0 1 1 29 17.500H12" stroke="#54bdf0" strokeWidth="6" />
          <path d="M29 11c3-6 3-8-1-8.500C20 1 6 14 3 25c-1.500 5 1 6.500 5.500 4" stroke="#f5c52e" strokeWidth="2.300" />
        </svg>
      </TaskButton>
      <div className="flex flex-1 items-end">
        <TaskButton box="ml-[-6px] w-[58px]" open>
          <svg width="34" height="32" viewBox="0 0 34 32">
            <path d="M1 3h12l2 3h17v22H1z" fill="#e9cf7b" /><path d="M3 2h10v7H3zM13 4h9v6h-9zM22 7h9v5h-9z" fill="#f6f1cf" /><path d="M4 2h5v2H4z" fill="#4a9c49" /><path d="M14 4h4v2h-4z" fill="#c23f35" />
            <path d="M1 10h32v18H1z" fill="#f3e09c" /><path d="M6 31V19h22v12h-4v-8H10v8z" fill="#9fd5ee" stroke="#5da5cb" /><path d="M10 19h14v5H10z" fill="#68b6dc" />
          </svg>
        </TaskButton>
        <TaskButton box="w-[64px]">
          <svg width="27" height="26" viewBox="0 0 28 28">
            <path d="M6 2h20v24H6z" fill="#a7d4e7" /><path d="M20 2v24M23 2v24" stroke="#437d9a" /><path d="M1 2h18v24H1z" fill="#6cb2d2" />
            <circle cx="11" cy="14.500" r="8.700" fill="#ee7a22" /><path d="M8 9v11l9-5.500z" fill="#fff" />
          </svg>
        </TaskButton>
        <TaskButton box="w-[64px]">
          <svg width="33" height="28" viewBox="0 0 33 28" className="mr-[2px]"><path d="M1 1v26l22-12z" fill="#7b5ebc" /><path d="M1 27 23 14 1 20z" fill="#5a3f9a" /><path d="M32 0v27L16 14z" fill="#ddd6e6" /><path d="M1 1v8l22 6z" fill="#a493d4" /></svg>
        </TaskButton>
        <TaskButton box="w-[58px]" open>
          <svg width="32" height="31" viewBox="0 0 32 31">
            <circle cx="17" cy="14" r="13" fill="#2465ab" /><path d="M15 3c5-2 11 1 13 6l-5 5-6-3z" fill="#59a7dd" />
            <path d="M3 4c0 3 2 4 4 4 5-1 7 2 5 4l-3 2c1 5 5 7 9 6 5-1 7-5 6-10 3 2 3 5 2 7 2-5 1-9-1-12 5 3 6 8 6 12-1 8-7 13-15 13C6 30-2 20 3 4z" fill="#eb5e1d" />
            <path d="M26 5c5 3 6 8 5 12-2 8-7 13-15 13 7-3 12-9 10-25z" fill="#f8bd35" />
          </svg>
        </TaskButton>
        <TaskButton box="ml-[4px] w-[58px]" open>
          <svg width="31" height="31" viewBox="0 0 31 31">
            <path d="M15.500 15.500 2.900 8.200A14.500 14.500 0 0 1 28.600 9H15.500z" fill="#e33b2e" /><path d="M15.500 15.500 15 30A14.500 14.500 0 0 1 2.800 8.300L9.500 19z" fill="#26a34a" /><path d="M15.500 9h13.200A14.500 14.500 0 0 1 15 30l6.500-11z" fill="#fbd02f" />
            <circle cx="15.500" cy="15.500" r="6.700" fill="#fff" /><circle cx="15.500" cy="15.500" r="5.300" fill="#4285f4" />
          </svg>
        </TaskButton>
        <TaskButton box="ml-[4px] w-[58px]" open>
          <svg width="32" height="32" viewBox="0 0 32 32">
            <path d="M2 10C0 4 6-1 12 2c10-2 18 5 16 15 3 7-4 13-10 10C8 29 0 21 2 10z" fill="#18a7e6" />
            <path d="M20 10c-1.500-3-9.500-3.500-9.500 1 0 5 10 2.500 10 7.500 0 4.500-8.500 4.500-10.500.500" fill="none" stroke="#fff" strokeWidth="3.500" />
            <circle cx="26" cy="26" r="5.700" fill="#fbb431" /><text x="26" y="29.500" textAnchor="middle" fontSize="9.500" fontWeight="700" fontFamily="Open Sans" fill="#111">5</text>
          </svg>
        </TaskButton>
        <TaskButton box="ml-[4px] w-[58px]" open>
          <svg width="32" height="32" viewBox="0 0 32 32">
            <path d="M1 3 9 1l8 3-3 24H5z" fill="#23cdd0" /><path d="M16 4 25 0l4 6-2 12z" fill="#f1ed5b" /><path d="M25 8l6 2-3 14-8 4z" fill="#23c5a6" /><path d="M5 26l20-3-2 9-15-2z" fill="#1d86d6" />
            <path d="M6.500 6.500h19v20h-19z" fill="#050505" /><text x="7.500" y="16.500" fontSize="10.500" fontWeight="800" fontFamily="Inter" fill="#fff" letterSpacing="-.8">WS</text><path d="M8.500 22.500h7v1.600h-7z" fill="#fff" />
          </svg>
        </TaskButton>
        <TaskButton box="ml-[4px] w-[58px]" open>
          <svg width="32" height="32" viewBox="0 0 32 32">
            <path d="M25 3l6 20-4 5-6-3z" fill="#c9b98a" /><path d="M9 3h17l-5 22H1z" fill="#8fc8d3" /><path d="M9 3h17l-1.500 6H6.500z" fill="#d8edf0" /><path d="M26 3l3 22-8 1z" fill="#eaf6f7" /><path d="M9 4.500h16.500" stroke="#8a9a9c" strokeDasharray="1.500 1" strokeWidth="2" /><path d="M1 25h20l7 1-15-4z" fill="#5ea3b3" />
          </svg>
        </TaskButton>
        <TaskButton box="ml-[4px] w-[58px]" open>
          <svg width="30" height="33" viewBox="0 0 30 33">
            <path d="M1 1h28v31H1z" fill="#f3ead2" stroke="#b5a98b" /><path d="M3 5h24v19H3z" fill="#3d95d8" /><path d="M3 5h24v7H3z" fill="#1c5ca8" /><path d="M3 17c8-5 14 3 24-2v9H3z" fill="#e2ae3e" /><path d="M6 17l4-6 4 6zM14 16l4-3 4 5z" fill="#57a83f" />
          </svg>
        </TaskButton>
      </div>
      <div className="flex h-[37px] items-center">
        <svg width="8" height="5" viewBox="0 0 8 5" className="mt-[3px]"><path d="M4 0l4 5H0z" fill="#eee" /></svg>
        <svg width="15" height="15" viewBox="0 0 15 15" className="ml-[13px] mt-[3px]">
          <path d="M1 0v14" stroke="#fff" strokeWidth="1.500" /><path d="M2 1c3-1.500 4 1 7 0v6c-3 1-4-1-7 0z" fill="#eee" /><circle cx="10.500" cy="10" r="4.500" fill="#d8231f" /><path d="M8.500 8l4 4M12.500 8l-4 4" stroke="#fff" strokeWidth="1.400" />
        </svg>
        <svg width="14" height="15" viewBox="0 0 14 15" className="ml-[8px] mt-[3px]" fill="none" stroke="#fff" strokeWidth="1.300">
          <path d="M8 2.500H1.500v11h7V12M3 1h3" /><path d="M4 5v6M6 5v6" /><path d="M8.500 1v4M12 1v4" /><path d="M7.500 5h6v2.500c0 2-1 2.500-3 2.500s-3-.5-3-2.500z" fill="#fff" stroke="none" /><path d="M10.500 9v5" />
        </svg>
        <svg width="14" height="11" viewBox="0 0 14 11" className="ml-[11px] mt-[3px]" fill="#fff"><path d="M0 8h2v3H0zM3 6.500h2V11H3zM6 4.500h2V11H6zM9 2.500h2V11H9z" /><path d="M12 0h2v11h-2z" fill="#666" /></svg>
        <svg width="15" height="13" viewBox="0 0 15 13" className="ml-[10px] mt-[2px]" fill="none" stroke="#ccc"><path d="M0 4h3l4-4v13L3 9H0z" fill="#fff" stroke="none" /><path d="M9 4.500a3 3 0 0 1 0 4M11 3a5 5 0 0 1 0 7M13 1.500a7 7 0 0 1 0 10" /></svg>
        <div className="ml-[18px] mt-px w-[56px] whitespace-nowrap text-center text-[12px] leading-[17px] tracking-[-0.35px] text-white">
          <div>10:55 PM</div>
          <div>08-Feb-17</div>
        </div>
        <i className="ml-[13px] h-full w-[13px] border-l border-[#4b5057] bg-[linear-gradient(135deg,#4a4f55,#14181d_60%)]" />
      </div>
    </footer>
  );
}

export default function App() {
  return (
    <div className={`flex h-[735px] w-[1362px] flex-col overflow-hidden bg-[#f7f6f3] ${lato}`}>
      <BrowserBar />
      <Toolbar />
      <div className="flex h-[586px] shrink-0">
        <Sidebar />
        <Workspace />
        <Rail />
      </div>
      <Taskbar />
    </div>
  );
}
